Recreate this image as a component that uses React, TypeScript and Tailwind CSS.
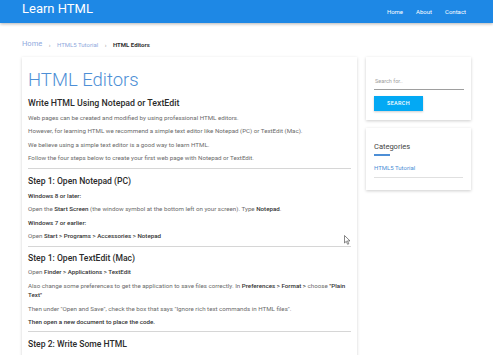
import React from "react";

const P = ({ children, className = "" }: { children: React.ReactNode; className?: string }) => (
  <p className={`mt-[4.5px] text-[6.2px] leading-[9px] text-[#6b6b6b] ${className}`}>{children}</p>
);

const H2 = ({ children, className = "" }: { children: React.ReactNode; className?: string }) => (
  <h2 className={`text-[8.6px] leading-[12px] font-medium text-[#2b2b2b] ${className}`}>{children}</h2>
);

const B = ({ children }: { children: React.ReactNode }) => (
  <b className="font-medium text-[#333]">{children}</b>
);

export default function App() {
  return (
    <div className="relative min-h-[355px] bg-white font-['Roboto','Liberation_Sans',sans-serif] overflow-hidden">
      {/* Top navbar */}
      <header className="h-[23px] bg-[#1e88e5] shadow-[0_1px_3px_rgba(0,0,0,0.3)]">
        <div className="mx-[22px] flex h-full items-start justify-between">
          <div className="pt-[1px] text-[13px] leading-[16px] text-white">Learn HTML</div>
          <nav className="flex h-full items-center gap-[13px] pr-[5px] text-[6px] text-white">
            <span>Home</span>
            <span>About</span>
            <span>Contact</span>
          </nav>
        </div>
      </header>

      {/* Breadcrumb */}
      <div className="mx-[22px] mt-[16px] flex items-center gap-[6.5px] h-[10px]">
        <span className="text-[7.5px] text-[#8fa9dd]">Home</span>
        <span className="text-[6px] text-[#999]">›</span>
        <span className="text-[6px] text-[#8fa9dd]">HTML5 Tutorial</span>
        <span className="text-[6px] text-[#999]">›</span>
        <span className="text-[6px] font-bold text-[#333]">HTML Editors</span>
      </div>

      <div className="mx-[22px] mt-[8px] flex gap-[9px] items-start">
        {/* Main content card */}
        <main className="w-[335px] min-h-[320px] bg-white px-[6px] pt-[10px] shadow-[0_1px_3px_rgba(0,0,0,0.18)]">
          <h1 className="text-[18.5px] leading-[26px] font-light text-[#4d8fd6]">HTML Editors</h1>
          <H2 className="mt-[4px] text-[8.8px]">Write HTML Using Notepad or TextEdit</H2>
          <P className="mt-[4.5px]">Web pages can be created and modified by using professional HTML editors.</P>
          <P>However, for learning HTML we recommend a simple text editor like Notepad (PC) or TextEdit (Mac).</P>
          <P>We believe using a simple text editor is a good way to learn HTML.</P>
          <P>Follow the four steps below to create your first web page with Notepad or TextEdit.</P>
          <hr className="mt-[5px] border-t-[1.5px] border-[#d6d6d6]" />

          <H2 className="mt-[6px]">Step 1: Open Notepad (PC)</H2>
          <P className="mt-[3.5px] text-[#333] font-medium">Windows 8 or later:</P>
          <P>
            Open the <B>Start Screen</B> (the window symbol at the bottom left on your screen). Type <B>Notepad</B>.
          </P>
          <P className="text-[#333] font-medium">Windows 7 or earlier:</P>
          <P>
            Open <B>Start &gt; Programs &gt; Accessories &gt; Notepad</B>
          </P>
          <hr className="mt-[4.5px] border-t-[1.5px] border-[#d6d6d6]" />

          <H2 className="mt-[5px]">Step 1: Open TextEdit (Mac)</H2>
          <P className="mt-[3.5px]">
            Open <B>Finder &gt; Applications &gt; TextEdit</B>
          </P>
          <P>
            Also change some preferences to get the application to save files correctly. In <B>Preferences &gt; Format &gt;</B> choose <B>"Plain</B>{" "}
            <B>Text"</B>
          </P>
          <P className="mt-[5px]">Then under "Open and Save", check the box that says "Ignore rich text commands in HTML files".</P>
          <P className="text-[#333] font-medium">Then open a new document to place the code.</P>
          <hr className="mt-[4px] border-t-[1.5px] border-[#d6d6d6]" />

          <H2 className="mt-[5.5px]">Step 2: Write Some HTML</H2>
        </main>

        {/* Sidebar */}
        <aside className="flex w-[105px] flex-col gap-[8px]">
          <div className="h-[63px] bg-white pl-[8px] pr-[7px] pt-[20px] shadow-[0_1px_3px_rgba(0,0,0,0.2)]">
            <div className="h-[13px] border-b border-[#9e9e9e] pl-[1px] text-[5.5px] leading-[9px] text-[#a0a0a0]">
              Search for..
            </div>
            <button className="mt-[6px] flex h-[15px] w-[49px] items-center justify-center bg-[#03a9f4] text-[5.5px] font-medium tracking-[0.3px] text-white shadow-[0_1px_2px_rgba(0,0,0,0.2)]">
              SEARCH
            </button>
          </div>

          <div className="h-[62px] bg-white pl-[8px] pr-[8px] pt-[14px] shadow-[0_1px_3px_rgba(0,0,0,0.2)]">
            <div className="text-[7.5px] leading-[10px] text-[#444]">Categories</div>
            <div className="mt-[2px] h-[1.5px] w-[16px] bg-[#4d8fd6]" />
            <div className="mt-[7px] h-[15px] border-b border-[#e0e0e0] text-[6px] leading-[9px] text-[#4d8fd6]">
              HTML5 Tutorial
            </div>
          </div>
        </aside>
      </div>

      {/* mouse cursor */}
      <svg className="absolute left-[344px] top-[235px]" width="7" height="10" viewBox="0 0 7 10">
        <path d="M0.5 0.5 L0.5 8 L2.3 6.3 L3.6 9.3 L4.8 8.8 L3.5 5.9 L6 5.9 Z" fill="#fff" stroke="#555" strokeWidth="0.7" />
      </svg>
    </div>
  );
}
